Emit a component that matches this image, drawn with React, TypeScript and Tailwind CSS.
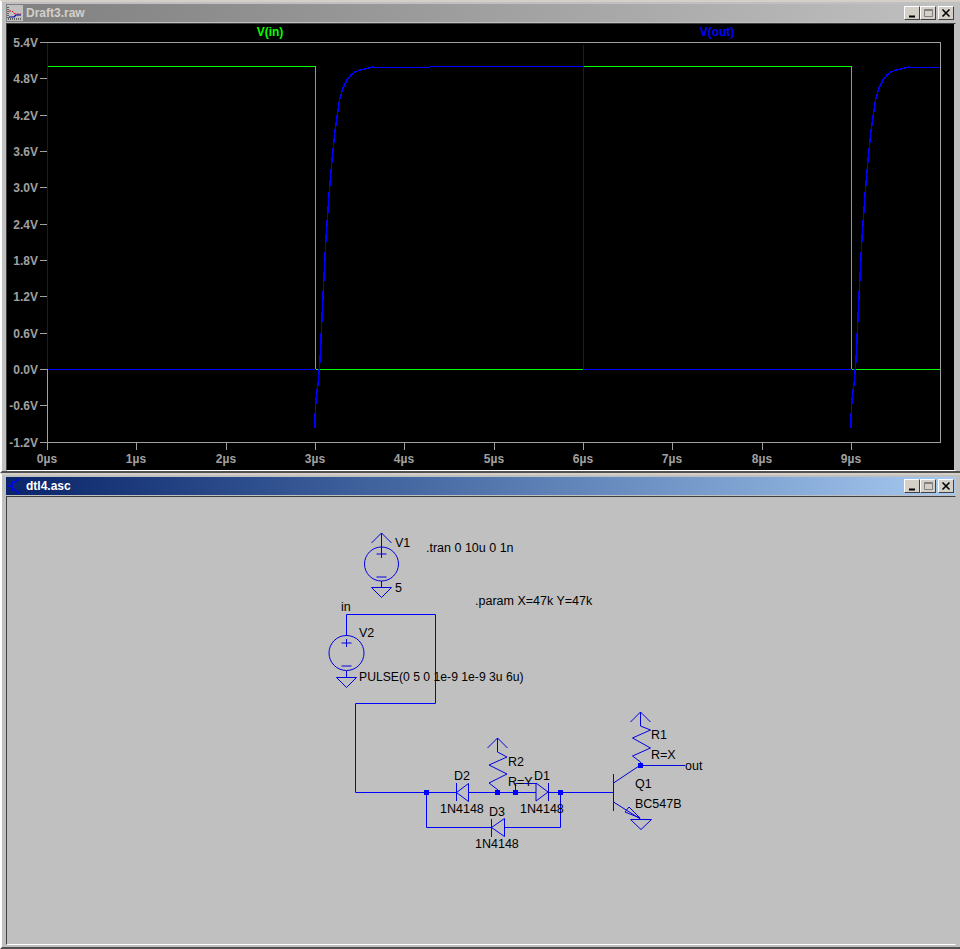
const LABEL_FONT = 'font-["Liberation_Sans",sans-serif]';

const yTicks = [
  { label: '5.4V', y: 42 },
  { label: '4.8V', y: 78 },
  { label: '4.2V', y: 115 },
  { label: '3.6V', y: 151 },
  { label: '3.0V', y: 187 },
  { label: '2.4V', y: 224 },
  { label: '1.8V', y: 260 },
  { label: '1.2V', y: 296 },
  { label: '0.6V', y: 333 },
  { label: '0.0V', y: 369 },
  { label: '-0.6V', y: 405 },
  { label: '-1.2V', y: 442 },
];

const xTicks = [47, 136, 226, 315, 404, 494, 583, 672, 762, 851].map((x, i) => ({ x, label: `${i}µs` }));

const rise = [
  [0, 428], [0, 418], [1, 400], [2, 390], [3, 385], [4, 372], [5, 360], [8, 296], [11, 238], [14, 195], [17, 160], [20, 131],
  [23, 110], [25, 98], [28, 88], [32, 80], [36, 75], [40, 72], [45, 70], [50, 69], [58, 67],
];

function riseAt(x0: number) {
  return rise.map(([dx, y]) => `${x0 + dx},${y}`).join(' ');
}

function WinButton({ kind }: { kind: 'min' | 'max' | 'close' }) {
  return (
    <div className="w-4 h-[14px] bg-[#d4d0c8] border-t border-l border-t-white border-l-white border-r border-b border-r-[#404040] border-b-[#404040] flex items-center justify-center">
      <svg width="12" height="10" viewBox="0 0 12 10">
        {kind === 'min' && <path d="M3 8.5h6" stroke="#000" strokeWidth="2" />}
        {kind === 'max' && <path d="M2.5 1.5h8v7h-8z M2.5 2.5h8" stroke="#808080" fill="none" />}
        {kind === 'close' && <path d="M2.5 1.5l7 7M9.5 1.5l-7 7" stroke="#000" strokeWidth="1.6" />}
      </svg>
    </div>
  );
}

function Window({
  title,
  icon,
  titleClass,
  className,
  children,
}: {
  title: string;
  icon: React.ReactNode;
  titleClass: string;
  className: string;
  children: React.ReactNode;
}) {
  return (
    <div className={`flex flex-col bg-[#c0c0c0] border-l-2 border-t-2 border-l-white border-t-[#d4d0c8] border-b-2 border-b-[#505050] px-1 pt-[2px] ${className}`}>
      <div className={`h-[18px] flex items-center shrink-0 ${titleClass}`}>
        <div className="w-4 h-4 ml-[1px] mr-[3px] shrink-0">{icon}</div>
        <span className="font-['Liberation_Sans',sans-serif] font-bold text-xs">{title}</span>
        <div className="ml-auto flex items-center pr-[2px]">
          <WinButton kind="min" />
          <WinButton kind="max" />
          <div className="w-[2px]" />
          <WinButton kind="close" />
        </div>
      </div>
      <div className="flex-1 mt-[1px] border border-t-[#404040] border-l-[#404040] border-b-white border-r-[#c0c0c0] overflow-hidden min-h-0">
        {children}
      </div>
    </div>
  );
}

function PlotIcon() {
  return (
    <svg width="16" height="16" viewBox="0 0 16 16">
      <rect width="16" height="16" fill="#c0c0c0" />
      <path d="M1 2v12h14" stroke="#000" fill="none" strokeDasharray="1 1" />
      <path d="M2 6h3l3 3h6" stroke="#e00000" fill="none" strokeDasharray="2 1" />
      <path d="M2 12h5l2-2h5" stroke="#0000a0" fill="none" strokeWidth="1.2" />
    </svg>
  );
}

function TransistorIcon() {
  return (
    <svg width="16" height="16" viewBox="0 0 16 16">
      <path d="M0 8h5M5 3v10M5 6l7-5M5 10l7 5" stroke="#0000ff" fill="none" strokeWidth="1.3" />
    </svg>
  );
}

function Plot() {
  return (
    <svg width="947" height="446" viewBox="7 24 947 446" className="block bg-black">
      <g shapeRendering="crispEdges" fill="none">
        <rect x="47.5" y="42.5" width="893" height="400" stroke="#a0a0a0" />
        {yTicks.map((t) => (
          <path key={t.y} d={`M40 ${t.y + 0.5}h7`} stroke="#a0a0a0" />
        ))}
        {xTicks.map((t) => (
          <path key={t.x} d={`M${t.x + 0.5} 443v7`} stroke="#a0a0a0" />
        ))}
        <path d="M47.5 43v326" stroke="#0000ff" />
        <path d="M315.5 67v302M851.5 67v302M48 66.5h268M584 66.5h268" stroke="#00ff00" />
        <path d="M316 369.5h267M852 369.5h88" stroke="#00ff00" />
        <path d="M583.5 45v325" stroke="#0000ff" />
        <path d="M48 369.5h267M584 369.5h267" stroke="#0000ff" />
        <path d="M373 67.5h57M430 66.5h153M909 67.5h31" stroke="#0000ff" />
        <polyline points={riseAt(315)} stroke="#0000ff" strokeWidth="1.5" />
        <polyline points={riseAt(851)} stroke="#0000ff" strokeWidth="1.5" />
      </g>
      <g className={LABEL_FONT} fontSize="12" fontWeight="700" fill="#a0a0a0">
        {yTicks.map((t) => (
          <text key={t.label} x="38" y={t.y + 5} textAnchor="end">
            {t.label}
          </text>
        ))}
        {xTicks.map((t) => (
          <text key={t.label} x={t.x} y="463" textAnchor="middle">
            {t.label}
          </text>
        ))}
        <text x="270" y="36" textAnchor="middle" fill="#00ff00">V(in)</text>
        <text x="717" y="36" textAnchor="middle" fill="#0000ff">V(out)</text>
      </g>
    </svg>
  );
}

function Source({ cx, cy, r }: { cx: number; cy: number; r: number }) {
  return (
    <>
      <circle cx={cx} cy={cy} r={r} />
      <path d={`M${cx} ${cy - 14}v8M${cx - 5} ${cy - 10}h10M${cx - 5} ${cy + 13}h10`} />
    </>
  );
}

function Ground({ x, y }: { x: number; y: number }) {
  return <path d={`M${x - 10} ${y}h20l-10 10z`} />;
}

function Supply({ x, y }: { x: number; y: number }) {
  return <path d={`M${x - 10} ${y + 10}l10-10 10 10M${x} ${y}v14`} />;
}

function Dot({ x, y }: { x: number; y: number }) {
  return <rect x={x - 2.5} y={y - 2.5} width="5" height="5" fill="#0000ff" stroke="none" />;
}

function Schematic() {
  return (
    <svg width="947" height="447" viewBox="7 497 947 447" className="block bg-[#c0c0c0]">
      <g stroke="#0000e0" strokeWidth="1" fill="none">
        {/* V1 */}
        <Supply x={381.5} y={533} />
        <path d="M381.5 547v3M381.5 581v6" />
        <Source cx={381.5} cy={564} r={17} />
        <Ground x={381.5} y={587.5} />

        {/* V2 and the input wire */}
        <path d="M346.5 636v-21.5h89v89h-80v89h70" stroke="#0000ff" />
        <Source cx={346.5} cy={653} r={17.5} />
        <path d="M346.5 671v6" />
        <Ground x={346.5} y={677.5} />

        {/* R2 */}
        <Supply x={497.5} y={738} />
        <path d="M497.5 752l9.5 5-18 8 18 9-18 9 9 7v2" />

        {/* D2, D1 */}
        <path d="M426 792.5h30M468 792.5h68M548 792.5h65M456.5 792.5l12-9v18zM456.5 783v18" stroke="#0000ff" />
        <path d="M515.5 792v-8.5h21M536 783v18l12-9zM548.5 783v18" />

        {/* D3 */}
        <path d="M426.5 792v35.5h65M504 827.5h56.5V792M491.5 827.5l13-9v18zM491.5 819v18" stroke="#0000ff" />
        <Dot x={426.5} y={792.5} />
        <Dot x={497.5} y={792.5} />
        <Dot x={515.5} y={792.5} />
        <Dot x={560.5} y={792.5} />

        {/* Q1, R1 */}
        <path d="M613.5 774v37M613.5 783l27-18M613.5 802l27 17M625 812l4-5 11 11z" />
        <Supply x={640.5} y={712} />
        <path d="M640.5 726l10 4-18 8 18 10-18 8 8 6v3M640 765.5h45" />
        <path d="M630.5 819.5h21l-10.5 10z" />
        <Dot x={640.5} y={765.5} />
      </g>
      <g className={LABEL_FONT} fontSize="12.5" fill="#000">
        <text x="395" y="547">V1</text>
        <text x="426" y="552">.tran 0 10u 0 1n</text>
        <text x="395" y="592">5</text>
        <text x="475" y="605">.param X=47k Y=47k</text>
        <text x="341" y="611">in</text>
        <text x="359" y="637">V2</text>
        <text x="359" y="681" fontSize="12.2">PULSE(0 5 0 1e-9 1e-9 3u 6u)</text>
        <text x="508" y="766">R2</text>
        <text x="508" y="786">R=Y</text>
        <text x="454" y="780">D2</text>
        <text x="534" y="780">D1</text>
        <text x="440" y="813">1N4148</text>
        <text x="520" y="813">1N4148</text>
        <text x="489" y="816">D3</text>
        <text x="475" y="848">1N4148</text>
        <text x="651" y="739">R1</text>
        <text x="651" y="759">R=X</text>
        <text x="685" y="770">out</text>
        <text x="635" y="788">Q1</text>
        <text x="635" y="808">BC547B</text>
      </g>
    </svg>
  );
}

export default function App() {
  return (
    <div className="w-[960px] h-[949px] flex flex-col bg-[#c0c0c0] overflow-hidden">
      <Window
        title="Draft3.raw"
        icon={<PlotIcon />}
        titleClass="bg-gradient-to-r from-[#808080] to-[#c0c0c0] text-[#d4d0c8]"
        className="h-[473px] shrink-0"
      >
        <Plot />
      </Window>
      <Window
        title="dtl4.asc"
        icon={<TransistorIcon />}
        titleClass="bg-gradient-to-r from-[#0a246a] to-[#a6caf0] text-white"
        className="flex-1 min-h-0 pb-[2px]"
      >
        <Schematic />
      </Window>
    </div>
  );
}
